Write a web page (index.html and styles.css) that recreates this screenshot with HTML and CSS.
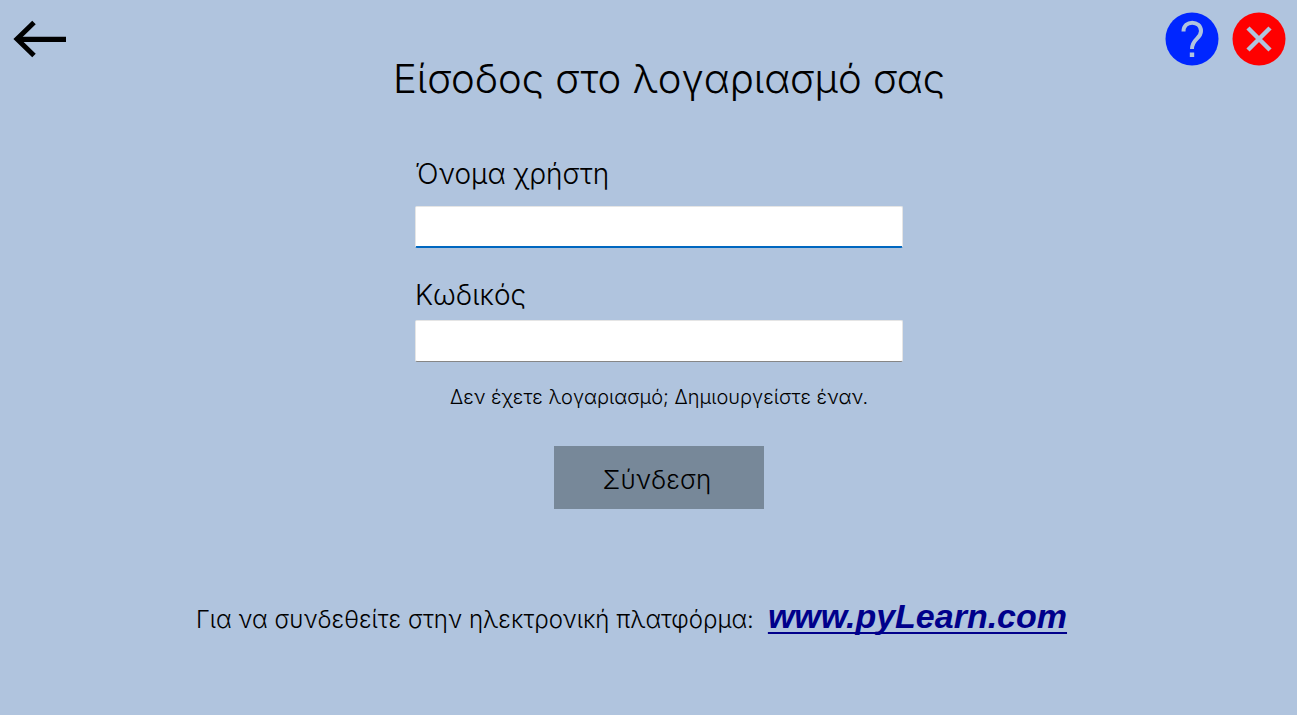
FILE: index.html
```html
<!DOCTYPE html>
<html lang="el">
<head>
<meta charset="utf-8">
<title>Είσοδος</title>
<meta name="viewport" content="width=device-width, initial-scale=1">
<link rel="stylesheet" href="styles.css">
</head>
<body>
<header class="topbar">
  <button class="icon-button" type="button" aria-label="Πίσω">
    <svg width="54" height="38" viewBox="0 0 54 38" fill="none" stroke="#000"><path d="M21 2.500 4 19 21 35.500" stroke-width="5"/><path d="M5 19.300H53" stroke-width="5.300"/></svg>
  </button>
  <div class="topbar-actions">
    <button class="icon-button" type="button" aria-label="Βοήθεια">
      <svg width="54" height="54" viewBox="0 0 54 54"><circle cx="27" cy="27" r="26.500" fill="#0026ff"/><path d="M18.500 19.500C18.500 7.500 36 8 36 19C36 27 27 26.500 27 37" fill="none" stroke="#b0c4de" stroke-width="4"/><path d="M24.800 40.500h4.400v4.500h-4.400z" fill="#b0c4de"/></svg>
    </button>
    <button class="icon-button" type="button" aria-label="Κλείσιμο">
      <svg width="54" height="54" viewBox="0 0 54 54"><circle cx="27" cy="27" r="26.500" fill="#f00"/><path d="M16 16 38 38M38 16 16 38" fill="none" stroke="#b0c4de" stroke-width="4.500"/></svg>
    </button>
  </div>
</header>
<main class="page">
  <h1 class="title">Είσοδος στο λογαριασμό σας</h1>
  <form class="login">
    <div class="group group-first">
      <label class="label" for="username">Όνομα χρήστη</label>
      <input class="field field-active" id="username" type="text">
    </div>
    <div class="group">
      <label class="label" for="password">Κωδικός</label>
      <input class="field" id="password" type="password">
    </div>
    <a class="register" href="#">Δεν έχετε λογαριασμό; Δημιουργείστε έναν.</a>
    <button class="submit" type="submit">Σύνδεση</button>
  </form>
</main>
<footer class="platform">
  <span class="platform-text">Για να συνδεθείτε στην ηλεκτρονική πλατφόρμα:</span>
  <a class="platform-link" href="#">www.pyLearn.com</a>
</footer>
</body>
</html>
```
FILE: styles.css
```css
* { box-sizing: border-box; }

body {
  margin: 0;
  min-height: 100vh;
  background: #b0c4de;
  color: #000;
  font-family: Inter, "Open Sans", sans-serif;
  font-weight: 300;
}

.topbar {
  display: flex;
  justify-content: space-between;
  align-items: center;
  height: 55px;
  padding: 23px 11px 0 13px;
}

.topbar-actions { display: flex; gap: 13px; }

.icon-button {
  display: block;
  padding: 0;
  border: 0;
  background: none;
}

.icon-button svg { display: block; }

.page { padding-left: 21px; }

.title {
  margin: 0;
  padding-left: 20px;
  font-size: 40px;
  line-height: 48px;
  font-weight: 300;
  text-align: center;
}

.login {
  display: flex;
  flex-direction: column;
  width: 488px;
  max-width: 100%;
  margin: 51px auto 0;
}

.group {
  display: flex;
  flex-direction: column;
  gap: 5px;
}

.group-first {
  gap: 12px;
  margin-bottom: 27px;
}

.label {
  font-size: 28px;
  line-height: 40px;
}

.field {
  height: 42px;
  padding: 4px 8px;
  border: 1px solid #e5e5e5;
  border-bottom-color: #868686;
  border-radius: 2px;
  background: #fff;
  font: inherit;
  font-size: 24px;
  outline: none;
}

.field-active { border-bottom: 2px solid #0067c0; }

.register {
  align-self: center;
  margin-top: 21px;
  color: #000;
  font-size: 20px;
  line-height: 28px;
  text-decoration: none;
}

.submit {
  align-self: center;
  width: 210px;
  height: 63px;
  margin-top: 35px;
  padding: 4px 4px 0 0;
  border: 0;
  background: #778899;
  color: #000;
  font: inherit;
  font-size: 26px;
}

.platform {
  display: flex;
  justify-content: center;
  align-items: baseline;
  gap: 14px;
  padding-right: 34px;
  margin-top: 85px;
}

.platform-text { font-size: 24px; }

.platform-link {
  color: #00008b;
  font-family: "Liberation Sans", Arial, sans-serif;
  font-size: 34px;
  font-style: italic;
  font-weight: 700;
  line-height: 44px;
  text-decoration: underline;
  text-decoration-thickness: 2px;
  text-decoration-skip-ink: none;
  text-underline-offset: 4px;
}
```
